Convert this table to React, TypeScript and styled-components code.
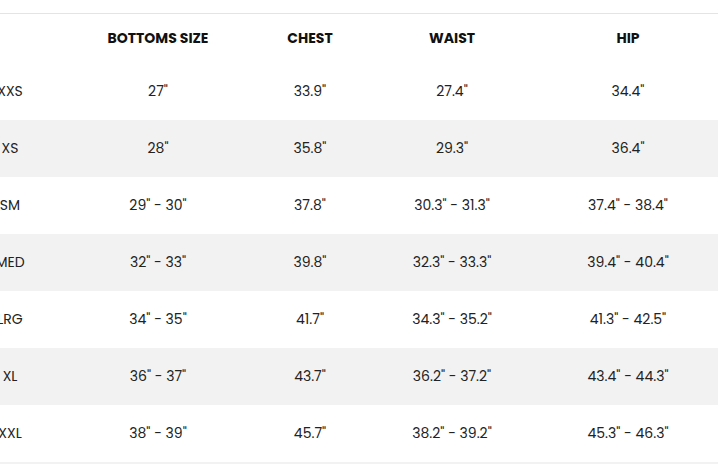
import React from 'react'
import styled, { createGlobalStyle } from 'styled-components'

const GlobalStyle = createGlobalStyle`
  html, body {
    margin: 0;
    padding: 0;
    background: #ffffff;
  }
  body {
    font-family: Poppins, "Open Sans", "Liberation Sans", sans-serif;
    color: #1f1f1f;
  }
`

const Wrapper = styled.div`
  width: 718px;
  padding-top: 13px;
  overflow: hidden;
`

const Table = styled.table`
  width: 760px;
  margin-left: -42px;
  border-collapse: collapse;
  table-layout: fixed;
  border-top: 1px solid #e4e4e4;
  border-bottom: 2px solid #f2f2f2;
`

const HeadCell = styled.th`
  height: 49px;
  padding: 0;
  text-align: center;
  vertical-align: middle;
  font-size: 14px;
  font-weight: 700;
  letter-spacing: 0;
  text-transform: uppercase;
  color: #111111;
`

const Row = styled.tr<{ $striped: boolean }>`
  background: ${({ $striped }) => ($striped ? '#f2f2f2' : '#ffffff')};
`

const Cell = styled.td`
  height: 57px;
  padding: 0;
  text-align: center;
  vertical-align: middle;
  font-size: 14px;
  font-weight: 400;
  color: #222222;
`

const columns = [
  { key: 'size', label: '', width: 104 },
  { key: 'bottoms', label: 'Bottoms Size', width: 192 },
  { key: 'chest', label: 'Chest', width: 112 },
  { key: 'waist', label: 'Waist', width: 172 },
  { key: 'hip', label: 'Hip', width: 180 },
]

const rows = [
  ['XXS', '27"', '33.9"', '27.4"', '34.4"'],
  ['XS', '28"', '35.8"', '29.3"', '36.4"'],
  ['SM', '29" - 30"', '37.8"', '30.3" - 31.3"', '37.4" - 38.4"'],
  ['MED', '32" - 33"', '39.8"', '32.3" - 33.3"', '39.4" - 40.4"'],
  ['LRG', '34" - 35"', '41.7"', '34.3" - 35.2"', '41.3" - 42.5"'],
  ['XL', '36" - 37"', '43.7"', '36.2" - 37.2"', '43.4" - 44.3"'],
  ['XXL', '38" - 39"', '45.7"', '38.2" - 39.2"', '45.3" - 46.3"'],
]

const App: React.FC = () => {
  return (
    <>
      <GlobalStyle />
      <Wrapper>
        <Table>
          <colgroup>
            {columns.map((c) => (
              <col key={c.key} style={{ width: c.width }} />
            ))}
          </colgroup>
          <thead>
            <tr>
              {columns.map((c) => (
                <HeadCell key={c.key}>{c.label}</HeadCell>
              ))}
            </tr>
          </thead>
          <tbody>
            {rows.map((r, i) => (
              <Row key={r[0]} $striped={i % 2 === 1}>
                {r.map((v, j) => (
                  <Cell key={j}>{v}</Cell>
                ))}
              </Row>
            ))}
          </tbody>
        </Table>
      </Wrapper>
    </>
  )
}

export default App
